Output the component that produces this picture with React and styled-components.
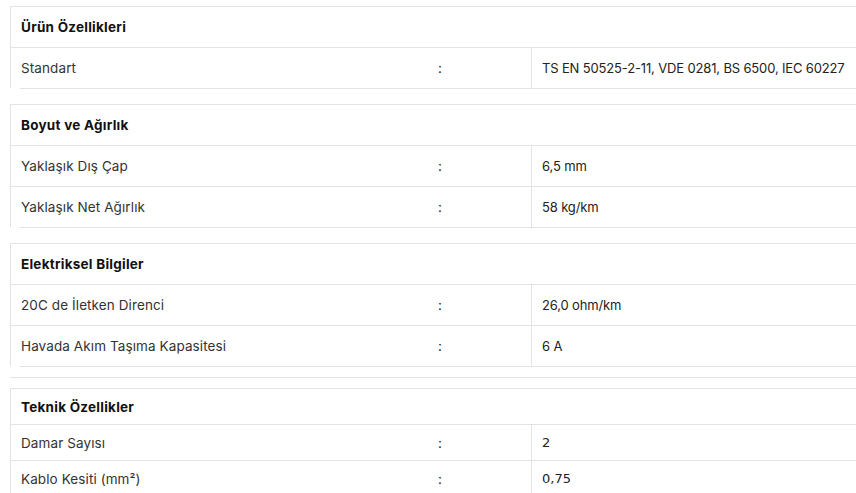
import styled, { createGlobalStyle } from "styled-components";

const GlobalStyle = createGlobalStyle`
  html, body {
    margin: 0;
    padding: 0;
    background: #ffffff;
  }
  body {
    font-family: Inter, "Noto Sans", sans-serif;
    color: #333333;
    overflow: hidden;
  }
`;

const LINE = "#e3e3e3";

const Page = styled.div`
  padding: 6px 0 0 10px;
`;

const Section = styled.section`
  border-top: 1px solid ${LINE};
  border-left: 1px solid ${LINE};
`;

const HeaderRow = styled.div`
  height: ${(p) => (p.$compact ? 35 : 40)}px;
  display: flex;
  align-items: center;
  padding: 0 10px;
  border-bottom: 1px solid ${LINE};
  font-size: 13.5px;
  font-weight: 700;
  letter-spacing: 0.25px;
  color: #111111;
`;

const Row = styled.div`
  display: grid;
  grid-template-columns: 417px 104px 1fr;
  height: ${(p) => (p.$compact ? 35 : 40)}px;
  border-bottom: ${(p) => (p.$last ? "none" : `1px solid ${LINE}`)};
`;

const Cell = styled.div`
  display: flex;
  align-items: center;
  padding: 0 10px;
  font-size: 13.5px;
  letter-spacing: 0.1px;
  white-space: nowrap;
  color: #333333;
`;

const Colon = styled(Cell)`
  border-right: 1px solid ${LINE};
  color: #222222;
`;

const Value = styled(Cell)`
  color: #222222;
  font-family: ${(p) =>
    p.$plain ? '"DejaVu Sans", Verdana, sans-serif' : 'Inter, "Noto Sans", sans-serif'};
  font-size: 13px;
  letter-spacing: ${(p) => (p.$plain ? "0" : "-0.15px")};
`;

const ClosingLine = styled.div`
  margin-left: 10px;
  height: 1px;
  background: ${LINE};
  margin-bottom: ${(p) => p.$gap}px;
`;

const Divider = styled.div`
  height: 1px;
  background: ${LINE};
  margin-bottom: 10px;
`;

const sections = [
  {
    title: "Ürün Özellikleri",
    rows: [["Standart", "TS EN 50525-2-11, VDE 0281, BS 6500, IEC 60227"]],
    gap: 15,
  },
  {
    title: "Boyut ve Ağırlık",
    rows: [
      ["Yaklaşık Dış Çap", "6,5 mm"],
      ["Yaklaşık Net Ağırlık", "58 kg/km"],
    ],
    gap: 15,
  },
  {
    title: "Elektriksel Bilgiler",
    rows: [
      ["20C de İletken Direnci", "26,0 ohm/km"],
      ["Havada Akım Taşıma Kapasitesi", "6 A"],
    ],
    gap: 10,
    divider: true,
  },
  {
    title: "Teknik Özellikler",
    rows: [
      ["Damar Sayısı", "2"],
      ["Kablo Kesiti (mm²)", "0,75"],
    ],
    compact: true,
    open: true,
  },
];

function SpecSection({ title, rows, gap, divider, compact, open }) {
  return (
    <>
      <Section>
        <HeaderRow $compact={compact}>{title}</HeaderRow>
        {rows.map(([label, value], i) => (
          <Row key={label} $compact={compact} $last={i === rows.length - 1 && !open}>
            <Cell>{label}</Cell>
            <Colon>:</Colon>
            <Value $plain={compact}>{value}</Value>
          </Row>
        ))}
      </Section>
      {!open && <ClosingLine $gap={gap} />}
      {divider && <Divider />}
    </>
  );
}

export default function App() {
  return (
    <>
      <GlobalStyle />
      <Page>
        {sections.map((s) => (
          <SpecSection key={s.title} {...s} />
        ))}
      </Page>
    </>
  );
}
